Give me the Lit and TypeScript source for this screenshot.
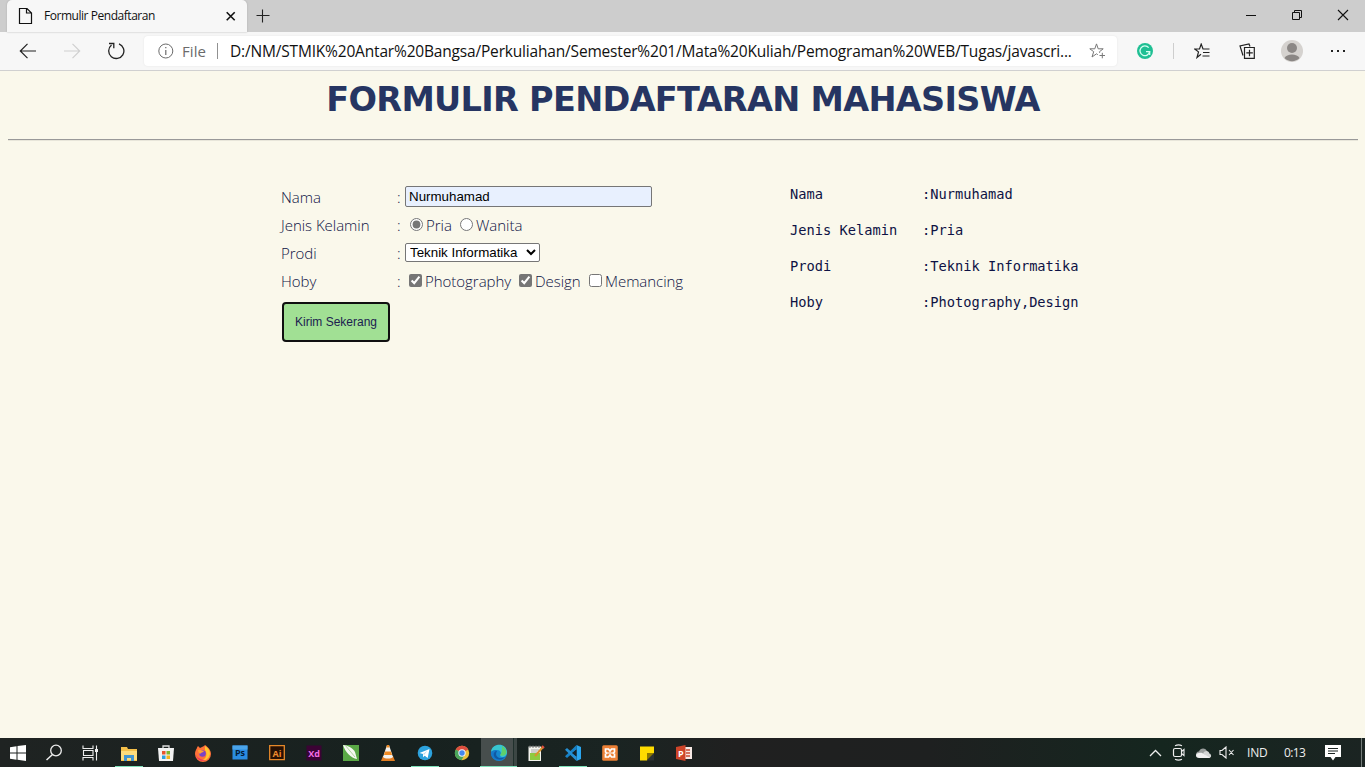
import { LitElement, html, css, svg } from "lit";
import { customElement } from "lit/decorators.js";

const icon = (w: number, h: number, body: unknown) =>
  html`<svg width=${w} height=${h} viewBox="0 0 ${w} ${h}" fill="none">${body}</svg>`;

const apps = [
  { cls: "open", art: svg`<path d="M2 4h6l1 2h9v12H2z" fill="#f5c04a"/><path d="M2 8h16v9H2z" fill="#ffdc7c"/><path d="M5 18v-6h10v6h-3v-3H8v3z" fill="#4395d1"/>` },
  { cls: "", art: svg`<path d="M7 5V3h6v2" stroke="#ddd" stroke-width="1.3"/><path d="M2 5h16l-1 13H3z" fill="#f2f2f2"/><path d="M6 8h3.5v3.5H6z" fill="#e8542c"/><path d="M10.5 8H14v3.500h-3.500z" fill="#7db52e"/><path d="M6 12.500h3.500V16H6z" fill="#2b9fe0"/><path d="M10.500 12.500H14V16h-3.500z" fill="#f3b51d"/>` },
  { cls: "", art: svg`<path d="M4 5c0-1 1-2 1-2l2 2 4-2 1-1c3 2 6 5 6 9a8 8 0 0 1-16 0c0-3 1-4 2-6z" fill="#ff7139"/><path d="M12 3c3 2 5 4 5 8a7 7 0 0 1-9 6c5 0 7-6 4-10z" fill="#ffc52e"/><path d="M3 12c1 5 6 7 10 5-3 0-8-1-10-5z" fill="#f03562"/><circle cx="9.500" cy="10.500" r="3.300" fill="#7a43c6"/><path d="M5 7c3-1 4 1 6 1-1 2-3 1-4 3-1-1-2-2-2-4z" fill="#ff9f32"/>` },
  { cls: "", art: svg`<path d="M2.500 2.500h15v14h-15z" fill="#2a8ce0"/><path d="M2.500 2.500h15v4h-15z" fill="#4aa4ea"/><text x="10" y="13" class="logo" fill="#041c38">Ps</text>` },
  { cls: "", art: svg`<path d="M2.700 2.700h14.600v14H2.700z" fill="#261004" stroke="#e5882a" stroke-width="1.300"/><text x="10" y="13.500" class="logo" fill="#ee8b2d">Ai</text>` },
  { cls: "", art: svg`<path d="M2.500 2.500h15v15h-15z" fill="#3b0334"/><text x="10" y="13.700" class="logo" fill="#f56de5">Xd</text>` },
  { cls: "", art: svg`<path d="M2 2h16v16H2z" fill="#5aa846"/><path d="M2 2c4 0 10 3 12 7l2 7C10 15 4 9 2 2z" fill="#f5f8f2"/><path d="M4 2l10 12" stroke="#aed49d"/>` },
  { cls: "", art: svg`<path d="M5 13h10l2 5H3z" fill="#e27d22"/><path d="M9 2h2l4 12c-2 2-8 2-10 0z" fill="#f4f1ec"/><path d="M8.300 4.500L9 2h2l.700 2.500zM7 8.500h6l1 3.500H6z" fill="#ef8a22"/>` },
  { cls: "open", art: svg`<circle cx="10" cy="10" r="7.300" fill="#2ca2dd"/><path d="M4.500 10L14.500 6l-1.800 9-3-2.200L8 14.300V11z" fill="#fff"/><path d="M8 11l4.500-3.200-3.300 4z" fill="#b8d8e9"/>` },
  { cls: "", art: svg`<circle cx="10" cy="10" r="7.200" fill="#ecc13b"/><path d="M10 10L3.800 6.400A7.200 7.200 0 0 1 16.200 6.400z" fill="#dd4d3f"/><path d="M3.800 6.400A7.200 7.200 0 0 0 9.500 17.200L12.500 12 10 10z" fill="#4aa55c"/><circle cx="10" cy="10" r="3.700" fill="#f1f2f2"/><circle cx="10" cy="10" r="2.700" fill="#4388ee"/>` },
  { cls: "active", art: svg`<circle cx="10" cy="10" r="8" fill="#1688cf"/><path d="M2 9C3 0 17-1 18 9c0 5-5 6-7 4 2-2 1-6-3-6-3 0-5 1-6 2z" fill="#38c6d0"/><path d="M13 3c4 2 6 7 3 9-2 1-4 1-5 0 2-2 2-5 2-9z" fill="#5ed06c"/><path d="M2 9c2-2 4-2 6-2-4 4-1 9 6 9-6 4-13-1-12-7z" fill="#1479ca"/><path d="M8 8c-3 5 2 9 8 6-3 4-10 3-11-1-1-3 1-5 3-5z" fill="#1059a3"/>` },
  { cls: "", art: svg`<path d="M2.500 3.500h12.500V18H2.500z" fill="#f4f4ee"/><path d="M4 10h10v7H4z" fill="#8ecb3f"/><path d="M4 2.500v2.500M7 2.500v2.500M10 2.500v2.500M13 2.500v2.500" stroke="#777"/><path d="M5 7h8M5 9h6" stroke="#a8a8a8"/><path d="M17 4L9 13" stroke="#d9932e" stroke-width="2"/><path d="M16 3l2 2" stroke="#e14e3e" stroke-width="2"/>` },
  { cls: "open", art: svg`<path d="M13.500 2L18 4v12l-4.500 2z" fill="#2aa6ef"/><path d="M13.500 2v4.500L4 15l-2-1.700z" fill="#1781c6"/><path d="M13.500 18v-4.500L4 5 2 6.700z" fill="#258fd3"/><path d="M13.500 6.500v7L9 10z" fill="#14232a"/>` },
  { cls: "", art: svg`<rect x="2.200" y="2.200" width="15.600" height="15.600" rx="1.500" fill="#ec8036"/><path d="M5.500 6h3L10 8l1.500-2h3v3l-1 1 1 1v3h-3L10 12l-1.500 2h-3v-3l1-1-1-1z" stroke="#fff" stroke-width="1.700"/><path d="M7 10h6" stroke="#fff"/>` },
  { cls: "", art: svg`<path d="M3 3.500h14V10l-7 7.500H3z" fill="#ffdc00"/><path d="M10 10h7v7.500h-7z" fill="#2c3132"/><path d="M10 10h7l-7 7z" fill="#8d7900"/>` },
  { cls: "", art: svg`<path d="M10 4h8v12h-8z" fill="#f7e9e5"/><path d="M12 7h4M12 10h4M12 13h4" stroke="#c94a30" stroke-width="1.400"/><path d="M2 4l9.500-2v16L2 16z" fill="#ce4429"/><text x="6.800" y="13.500" class="logo" fill="#fff">P</text>` },
];

@customElement("browser-bar")
class BrowserBar extends LitElement {
  static styles = css`
    :host { display: block; font-family: "Open Sans", "Noto Sans", sans-serif; color: #111; }
    svg { display: block; }
    .tabs { display: flex; height: 32px; padding-left: 7px; background: #cdcdcd; box-sizing: border-box; }
    .tab { display: flex; align-items: center; width: 240px; height: 32px; box-sizing: border-box; padding-left: 11px; background: #f7f7f7; border-radius: 5px 5px 0 0; box-shadow: 0 0 2px #aaa; }
    .title { flex: 1; padding-left: 11px; font-size: 12px; letter-spacing: -0.46px; line-height: 32px; white-space: nowrap; }
    .close { padding-right: 11px; }
    .add { padding: 9px 0 0 9px; }
    .window { display: flex; margin-left: auto; height: 29px; margin-right: -1px; }
    .window span { display: grid; place-items: center; width: 46px; }
    .tools { display: flex; align-items: center; height: 38px; background: #f7f7f7; border-bottom: 1px solid #d0d0d0; }
    .cell { display: grid; place-items: center; width: 44px; flex: none; }
    .nav { display: flex; padding-left: 6px; width: 138px; box-sizing: border-box; flex: none; }
    .address { display: flex; align-items: center; width: 973px; height: 30px; margin-left: 6px; box-sizing: border-box; padding: 0 12px 0 14px; background: #fff; border-radius: 4px; box-shadow: 0 0 2px #e2e2e2; flex: none; }
    .scheme { margin-left: 8px; width: 27px; color: #6b6b6b; font-size: 15px; letter-spacing: 0.1px; }
    .bar { width: 1px; height: 16px; margin-left: 8px; background: #919191; }
    .url { flex: 1; margin-left: 12px; font-size: 15.5px; letter-spacing: -0.18px; white-space: nowrap; }
    .ext { width: 56px; }
    .split { width: 1px; height: 16px; background: #cecece; flex: none; }
    .fav { width: 56px; }
    .coll { width: 33px; }
    .user { width: 57px; }
    .more { width: 35px; }
  `;
  render() {
    return html`
      <div class="tabs">
        <div class="tab">
          ${icon(15, 18, svg`<path d="M1.500 1.500h7.500l4.500 4.500v10.500h-12zM8.500 1.500V6h5" stroke="#111" stroke-width="1.200"/>`)}
          <span class="title">Formulir Pendaftaran</span>
          <span class="close">${icon(11, 10, svg`<path d="M1.700 1.200l8 8M9.700 1.200l-8 8" stroke="#111" stroke-width="1.600"/>`)}</span>
        </div>
        <div class="add">${icon(14, 14, svg`<path d="M.500 6.500h13M6.500.500v13" stroke="#222" stroke-width="1.100"/>`)}</div>
        <div class="window">
          <span>${icon(10, 10, svg`<path d="M0 5.500h10" stroke="#111"/>`)}</span>
          <span>${icon(10, 10, svg`<path d="M.500 2.500h7v7h-7zM2.500 2V.500h7v7H8" stroke="#111"/>`)}</span>
          <span>${icon(12, 12, svg`<path d="M1 1l10 10M11 1L1 11" stroke="#111" stroke-width="1.100"/>`)}</span>
        </div>
      </div>
      <div class="tools">
        <div class="nav">
          <span class="cell">${icon(18, 16, svg`<path d="M17 8H1.500M8.500.800L1.300 8l7.200 7.200" stroke="#222" stroke-width="1.200"/>`)}</span>
          <span class="cell">${icon(18, 16, svg`<path d="M1 8h15.500M9.500.800L16.700 8l-7.200 7.200" stroke="#d0d0d0" stroke-width="1.200"/>`)}</span>
          <span class="cell">${icon(18, 18, svg`<path d="M12 1.800A7.600 7.600 0 1 1 4.500 3M2 1.500h4.800v4.800" stroke="#222" stroke-width="1.300"/>`)}</span>
        </div>
        <div class="address">
          ${icon(16, 16, svg`<circle cx="7.800" cy="8" r="7" stroke="#6b6b6b"/><path d="M7.800 7v5M7.800 4v1.300" stroke="#6b6b6b" stroke-width="1.200"/>`)}
          <span class="scheme">File</span><span class="bar"></span>
          <span class="url">D:/NM/STMIK%20Antar%20Bangsa/Perkuliahan/Semester%201/Mata%20Kuliah/Pemograman%20WEB/Tugas/javascri...</span>
          ${icon(16, 16, svg`<path d="M8.800 11.700L7.500 10.800 3 14l1.700-5.300L.800 5.800h5L7.500.900l1.700 4.900h5l-3.800 3 .300 1M10.500 12.500H16M13.300 9.800v5.500" stroke="#777"/>`)}
        </div>
        <span class="cell ext">${icon(16, 16, svg`<circle cx="8" cy="8" r="8" fill="#1fbf93"/><path d="M11.700 4.700A4.900 4.900 0 1 0 12.700 8.700H9M12.700 8.500v3.500" stroke="#d5fff1" stroke-width="1.300"/>`)}</span>
        <span class="split"></span>
        <span class="cell fav">${icon(16, 16, svg`<path d="M7 11.300L3 14.500l1.500-5.600L.800 6h4.700L7.200 1.100 9 6h6.500M9 9.500h6.500M8.500 13h7" stroke="#222" stroke-width="1.200"/>`)}</span>
        <span class="cell coll">${icon(16, 16, svg`<path d="M5.500 4.500h9.800v10.800H5.500zM7.300 9.900h6.500M10.500 6.700v6.500" stroke="#222" stroke-width="1.200"/><path d="M4 12.500L1 3l9-2 1 2.500" stroke="#222" stroke-width="1.200"/>`)}</span>
        <span class="cell user">${icon(22, 22, svg`<circle cx="11" cy="11" r="11" fill="#d5d2cf"/><circle cx="11" cy="8" r="5" fill="#8b8785"/><path d="M3.500 18c2-4.700 13-4.700 15 0a10.500 10.500 0 0 1-15 0z" fill="#8b8785"/>`)}</span>
        <span class="cell more">${icon(16, 4, svg`<path d="M1 1h2v2H1zM7 1h2v2H7zM13 1h2v2h-2z" fill="#222"/>`)}</span>
      </div>`;
  }
}

@customElement("student-form")
class StudentForm extends LitElement {
  static styles = css`
    :host { display: block; background: #faf8eb; color: #0e1244; font-family: "Open Sans", "Noto Sans", sans-serif; padding: 0 7px 0 8px; overflow: hidden; }
    h1 { margin: 5px 0 0 0; height: 47px; text-align: center; color: #263562; font: bold 33.500px/47px "DejaVu Sans", sans-serif; white-space: nowrap; letter-spacing: -0.69px; }
    .rule { height: 1px; margin-top: 16px; background: #999; border-bottom: 1px solid #e8e6da; }
    .columns { display: flex; padding: 42px 0 0 273px; }
    form { width: 509px; font-size: 15px; font-weight: 300; }
    .row { display: grid; grid-template-columns: 116px 8px 1fr; align-items: center; height: 28px; white-space: nowrap; letter-spacing: -0.03px; }
    .field { display: flex; align-items: center; }
    .text { width: 247px; height: 21px; box-sizing: border-box; margin: -2px 0 0; padding: 0 3px; border: 1px solid #767676; border-radius: 2px; background: #e8f0fe; font: 13.33px "Liberation Sans", sans-serif; color: #000; }
    .pick { width: 135px; height: 19px; margin: -1px 0 0; padding: 0; box-sizing: border-box; border: 1px solid #767676; border-radius: 2px; background: #fff; color: #000; font: 13.33px "Liberation Sans", sans-serif; }
    .mark { width: 13px; height: 13px; margin: -1px 3px 0 4px; accent-color: #767676; flex: none; }
    .radio { margin-left: 5px; margin-right: 3px; }
    .pria { width: 29px; }
    .photo { width: 90px; }
    .design { width: 50px; }
    .send { display: block; width: 108px; height: 40px; margin: 7px 0 0 1px; padding: 0; border: 2px solid #101010; border-radius: 4px; background: #a1e094; color: #1c2050; font: 12px "Liberation Sans", sans-serif; }
    .result { font: 13.7px/36px "DejaVu Sans Mono", monospace; white-space: nowrap; margin-top: -7px; }
    .line { display: grid; grid-template-columns: 132px 1fr; height: 36px; }
  `;
  render() {
    return html`
      <h1>FORMULIR PENDAFTARAN MAHASISWA</h1>
      <div class="rule"></div>
      <div class="columns">
        <form>
          <div class="row"><span>Nama</span><span>:</span><div class="field"><input class="text" value="Nurmuhamad" /></div></div>
          <div class="row"><span>Jenis Kelamin</span><span>:</span>
            <div class="field"><input class="mark radio" type="radio" name="jk" checked /><span class="pria">Pria</span><input class="mark radio" type="radio" name="jk" /><span>Wanita</span></div></div>
          <div class="row"><span>Prodi</span><span>:</span><div class="field"><select class="pick"><option>Teknik Informatika</option></select></div></div>
          <div class="row"><span>Hoby</span><span>:</span>
            <div class="field"><input class="mark" type="checkbox" checked /><span class="photo">Photography</span><input class="mark" type="checkbox" checked /><span class="design">Design</span><input class="mark" type="checkbox" /><span>Memancing</span></div></div>
          <button class="send" type="button">Kirim Sekerang</button>
        </form>
        <div class="result">
          <div class="line"><span>Nama</span><span>:Nurmuhamad</span></div>
          <div class="line"><span>Jenis Kelamin</span><span>:Pria</span></div>
          <div class="line"><span>Prodi</span><span>:Teknik Informatika</span></div>
          <div class="line"><span>Hoby</span><span>:Photography,Design</span></div>
        </div>
      </div>`;
  }
}

@customElement("task-bar")
class TaskBar extends LitElement {
  static styles = css`
    :host { display: flex; height: 29px; background: linear-gradient(90deg, #1f2322, #17211f 30%, #1a2422 45%, #202020 54%, #1e2020 68%, #15261f 85%, #1b2422); color: #eee; font-family: "Open Sans", "Noto Sans", sans-serif; }
    svg { display: block; }
    .slot { display: grid; place-items: center; width: 36px; flex: none; }
    .system { display: flex; width: 110px; flex: none; }
    .apps { display: flex; }
    .app { display: grid; place-items: center; width: 37px; box-sizing: border-box; position: relative; }
    .app.open::after { content: ""; position: absolute; left: 5px; right: 4px; bottom: 0; height: 1px; background: #7ee0b9; }
    .app.active { background: linear-gradient(90deg, transparent 0 1px, #474e4d 1px 33px, #20302c 33px 34px, #3c4644 34px 37px); border-bottom: 1px solid #7ee0b9; }
    .active svg { margin-top: 1px; }
    .logo { font: bold 9px "Open Sans", sans-serif; text-anchor: middle; }
    .tray { display: flex; align-items: center; margin-left: auto; font-size: 12px; }
    .t { display: grid; place-items: center; width: 24px; }
    .lang { width: 37px; padding-left: 8px; letter-spacing: -0.2px; }
    .time { width: 41px; letter-spacing: -0.6px; }
    .edge { width: 1px; height: 29px; margin: 0 3px 0 20px; background: #737b78; }
  `;
  render() {
    return html`
      <div class="system">
        <span class="slot">${icon(16, 16, svg`<path d="M0 2.300L6.500 1.300V7.500H0zM7.500 1.100L16 0v7.500H7.500zM0 8.500h6.500v6.200L0 13.700zM7.500 8.500H16V16l-8.500-1.200z" fill="#fff"/>`)}</span>
        <span class="slot">${icon(18, 17, svg`<circle cx="11" cy="6.500" r="5.300" stroke="#eee" stroke-width="1.300"/><path d="M7.500 10.500L1.500 16" stroke="#eee" stroke-width="1.500"/>`)}</span>
        <span class="slot">${icon(17, 16, svg`<path d="M1 .500V3.500h10V.500M1 15.500v-3h10v3M1.500 5.500h9.500v5H1.500zM14.500.500v15" stroke="#eee" stroke-width="1.100"/><path d="M13 4h3v3h-3z" fill="#eee"/>`)}</span>
      </div>
      <div class="apps">${apps.map((a) => html`<span class="app ${a.cls}">${icon(20, 20, a.art)}</span>`)}</div>
      <div class="tray">
        <span class="t">${icon(13, 8, svg`<path d="M1 7l5.500-5.500L12 7" stroke="#eee" stroke-width="1.300"/>`)}</span>
        <span class="t">${icon(14, 17, svg`<rect x="1.500" y="4.500" width="8" height="8" rx="1.500" stroke="#eee" stroke-width="1.200"/><path d="M9.500 7.500l2.500-2v6l-2.500-2M3 1.700q3.500-1.600 7 0M3 15.300q3.500 1.600 7 0" stroke="#eee" stroke-width="1.100"/>`)}</span>
        <span class="t">${icon(17, 12, svg`<path d="M1.500 9C.500 6 2 4.500 4 4.500 5 1 10 0 12 4l-3 5z" fill="#9b9f9e"/><path d="M8 6.500C10 3 14 3.500 14.300 6.500c2.500.500 2.500 4.500-.300 4.500z" fill="#d5d7d6"/><path d="M4 11c-4 0-4-5 0-5 2-.700 3.500 0 4.500.700L15 10.500c-.500.500-1 .500-1.500.500z" fill="#f2f2f2"/>`)}</span>
        <span class="t">${icon(16, 13, svg`<path d="M1 4.500h2l4-3.500v11L3 8.500H1zM10 4l4.500 5M14.500 4L10 9" stroke="#eee" stroke-width="1.100"/>`)}</span>
        <span class="lang">IND</span><span class="time">0:13</span>
        ${icon(16, 17, svg`<path d="M0 1h16v12H10.500L8 16.500 5.500 13H0z" fill="#fff"/><path d="M3 4.500h10M3 7h10M3 9.500h7" stroke="#1b2422"/>`)}
        <span class="edge"></span>
      </div>`;
  }
}

@customElement("app-root")
class AppRoot extends LitElement {
  static styles = css`
    :host { display: flex; flex-direction: column; width: 100%; height: 100vh; overflow: hidden; }
    student-form { flex: 1; min-height: 0; }
  `;
  render() {
    return html`<browser-bar></browser-bar><student-form></student-form><task-bar></task-bar>`;
  }
}
